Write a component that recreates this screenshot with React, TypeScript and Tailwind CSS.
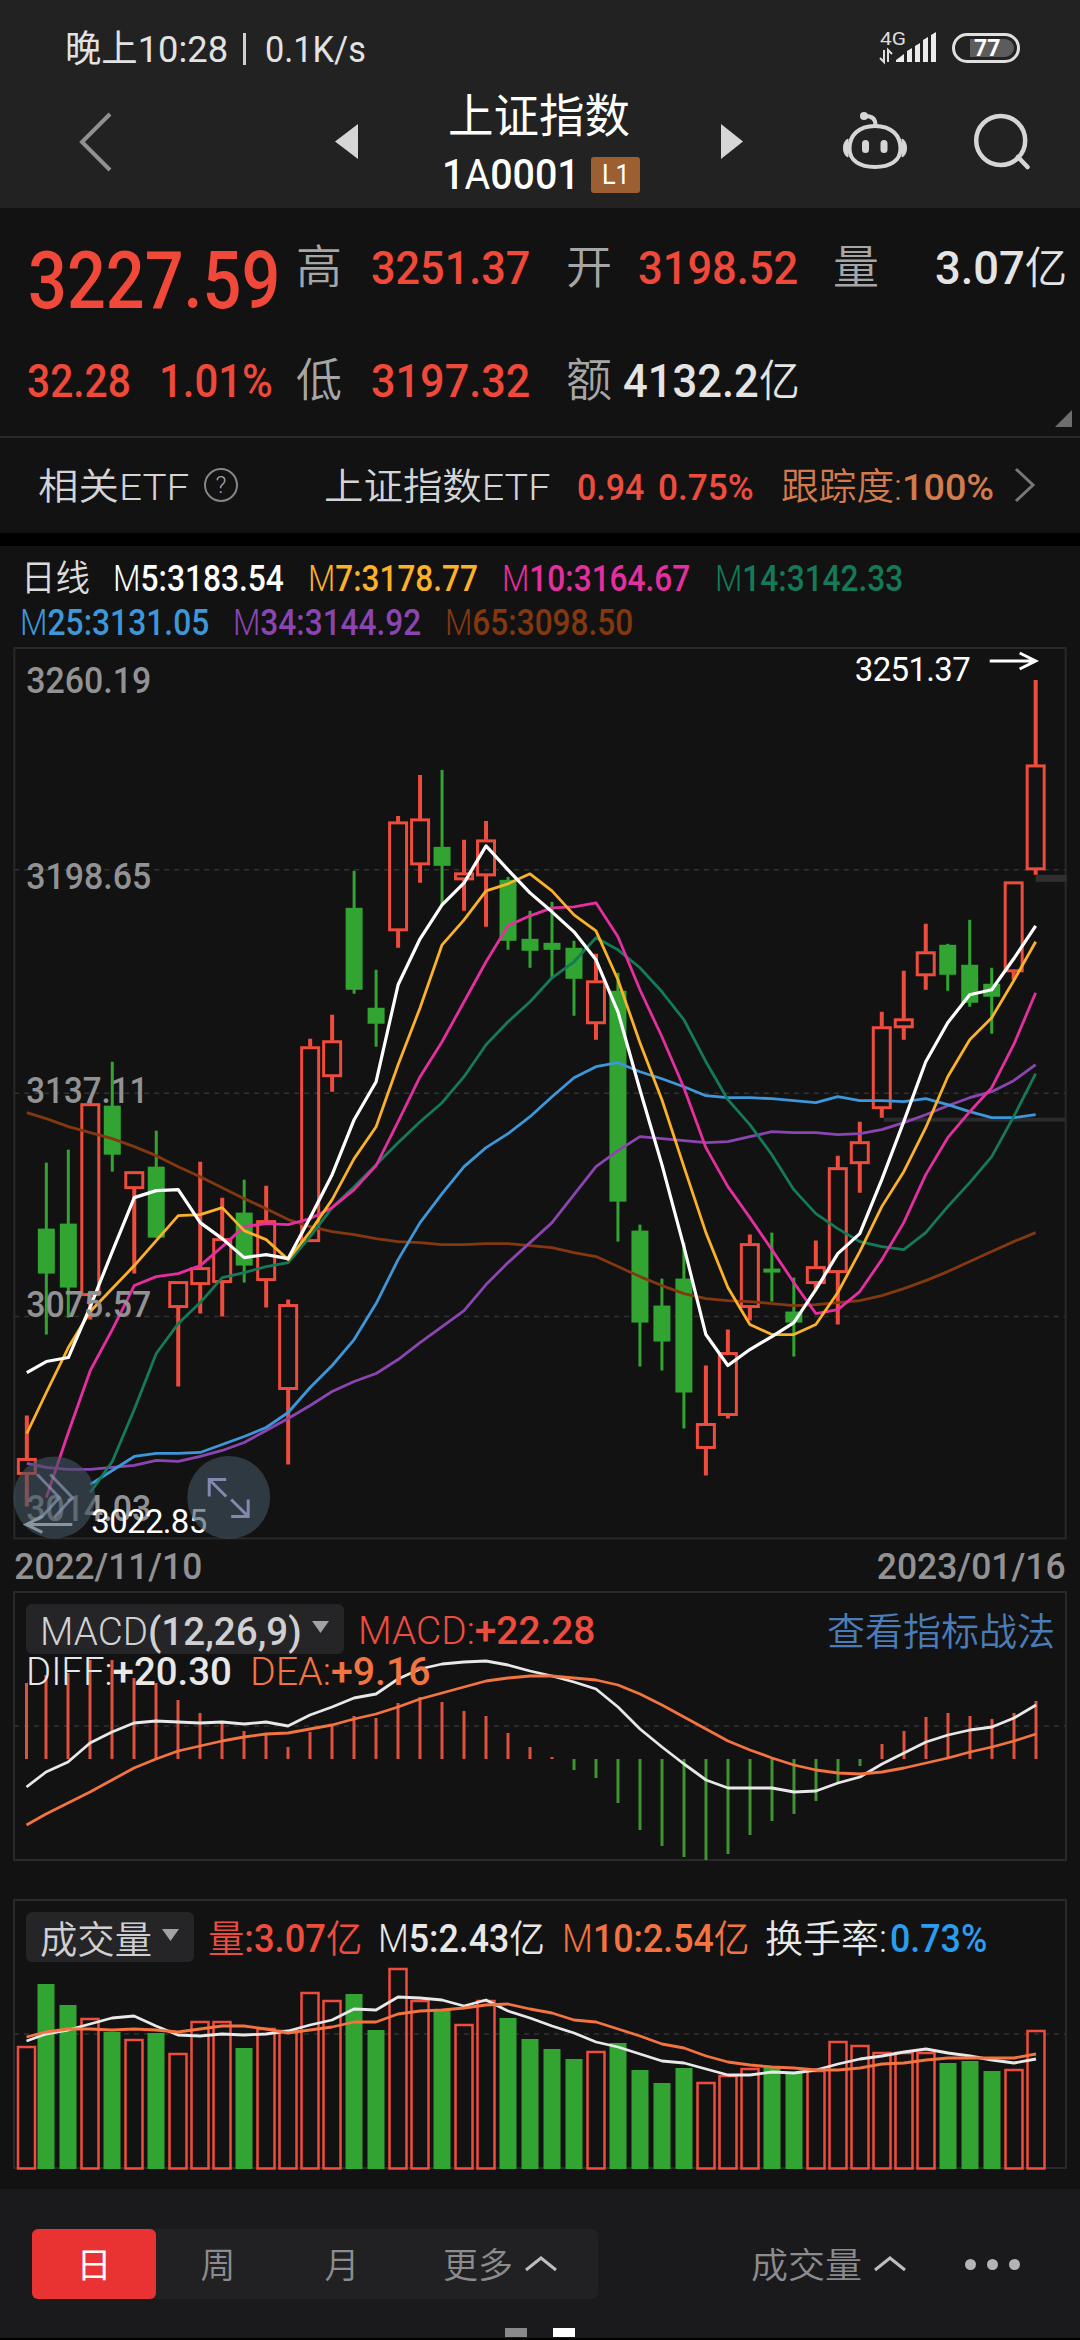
import { useLayoutEffect, useRef, type ReactNode } from "react";
import clsx from "clsx";

const RED = "#ee4d3d";
const GREEN = "#31a431";
const CENTER = (i: number) => (i === 0 ? 26.5 : 24 + 22 * i);

// Squeezes or stretches its text to the width of its box, the way
// the narrow DIN figures sit in their fixed columns.
function Fit({ className, children }: { className?: string; children: ReactNode }) {
  const box = useRef<HTMLDivElement>(null);
  const text = useRef<HTMLSpanElement>(null);

  useLayoutEffect(() => {
    if (!box.current || !text.current) return;
    const scale = box.current.clientWidth / text.current.offsetWidth;
    text.current.style.transform = `scaleX(${scale})`;
  }, []);

  return (
    <div ref={box} className={clsx("shrink-0 leading-none whitespace-pre", className)}>
      <span ref={text} className="inline-block origin-left">
        {children}
      </span>
    </div>
  );
}

type Candle = [up: number, high: number, top: number, bottom: number, low: number];

const candles: Candle[] = [
  [1, 1416, 1459, 1475, 1507],
  [0, 1163, 1229, 1274, 1335],
  [0, 1150, 1224, 1288, 1318],
  [1, 1099, 1104, 1296, 1320],
  [0, 1062, 1106, 1155, 1172],
  [1, 1172, 1172, 1189, 1274],
  [0, 1131, 1167, 1238, 1238],
  [1, 1282, 1282, 1308, 1387],
  [1, 1162, 1268, 1285, 1314],
  [1, 1198, 1239, 1283, 1317],
  [0, 1180, 1213, 1266, 1283],
  [1, 1186, 1221, 1281, 1308],
  [1, 1300, 1305, 1390, 1465],
  [1, 1039, 1047, 1242, 1242],
  [1, 1015, 1041, 1077, 1092],
  [0, 871, 908, 990, 994],
  [0, 970, 1008, 1024, 1047],
  [1, 816, 822, 931, 948],
  [1, 775, 819, 865, 883],
  [0, 770, 847, 866, 905],
  [1, 840, 873, 880, 911],
  [1, 821, 840, 876, 927],
  [0, 877, 880, 941, 950],
  [0, 911, 939, 951, 968],
  [0, 902, 943, 950, 979],
  [0, 941, 948, 979, 1016],
  [1, 954, 981, 1024, 1040],
  [0, 973, 991, 1202, 1242],
  [0, 1225, 1231, 1323, 1367],
  [0, 1279, 1306, 1342, 1371],
  [0, 1243, 1279, 1393, 1429],
  [1, 1366, 1424, 1449, 1476],
  [1, 1330, 1353, 1416, 1419],
  [1, 1235, 1244, 1308, 1321],
  [0, 1233, 1269, 1273, 1302],
  [0, 1278, 1312, 1323, 1357],
  [1, 1241, 1267, 1284, 1290],
  [1, 1156, 1168, 1273, 1325],
  [1, 1122, 1142, 1164, 1193],
  [1, 1012, 1027, 1109, 1118],
  [1, 971, 1019, 1028, 1040],
  [1, 924, 952, 976, 990],
  [0, 944, 945, 975, 991],
  [0, 920, 965, 1003, 1007],
  [0, 968, 984, 997, 1034],
  [1, 882, 882, 972, 980],
  [1, 680, 765, 870, 875],
];

type Series = { color: string; start?: number; width?: number; ys: number[] };

const averages: Series[] = [
  {
    color: "#84380f",
    ys: [1113, 1119, 1127, 1133, 1139, 1147, 1156, 1167, 1177, 1188, 1199, 1209, 1220, 1227, 1232, 1235, 1239, 1242, 1243, 1245, 1245, 1244, 1244, 1246, 1248, 1253, 1257, 1267, 1277, 1286, 1294, 1299, 1301, 1302, 1304, 1306, 1305, 1303, 1301, 1296, 1289, 1281, 1272, 1262, 1252, 1242, 1233],
  },
  {
    color: "#8b45b0",
    ys: [1464, 1468, 1470, 1470, 1468, 1466, 1461, 1462, 1457, 1451, 1443, 1431, 1419, 1406, 1392, 1382, 1374, 1360, 1343, 1327, 1311, 1285, 1263, 1243, 1223, 1195, 1167, 1151, 1137, 1139, 1141, 1143, 1142, 1137, 1132, 1133, 1133, 1135, 1134, 1130, 1123, 1115, 1106, 1098, 1092, 1081, 1065],
  },
  {
    color: "#3d97d8",
    start: 3,
    ys: [1485, 1471, 1457, 1454, 1454, 1453, 1445, 1437, 1428, 1413, 1388, 1366, 1340, 1304, 1260, 1223, 1194, 1167, 1148, 1134, 1117, 1097, 1078, 1067, 1063, 1072, 1079, 1087, 1096, 1098, 1098, 1099, 1101, 1103, 1097, 1101, 1101, 1102, 1099, 1105, 1112, 1118, 1118, 1115],
  },
  {
    color: "#147a57",
    start: 3,
    ys: [1493, 1462, 1410, 1354, 1324, 1303, 1278, 1273, 1267, 1263, 1237, 1208, 1187, 1165, 1143, 1122, 1103, 1077, 1045, 1022, 1002, 978, 962, 938, 950, 968, 992, 1020, 1062, 1100, 1125, 1155, 1190, 1214, 1229, 1242, 1247, 1250, 1233, 1207, 1183, 1157, 1117, 1074],
  },
  {
    color: "#e52fa0",
    start: 1,
    ys: [1498, 1433, 1371, 1330, 1286, 1277, 1274, 1266, 1247, 1227, 1224, 1225, 1219, 1208, 1190, 1166, 1122, 1077, 1042, 1002, 962, 926, 916, 908, 907, 903, 937, 990, 1037, 1088, 1148, 1187, 1218, 1250, 1283, 1314, 1310, 1292, 1260, 1223, 1175, 1138, 1112, 1088, 1045, 993],
  },
  {
    color: "#fbb128",
    ys: [1434, 1393, 1348, 1312, 1289, 1266, 1241, 1216, 1215, 1208, 1231, 1240, 1260, 1232, 1200, 1159, 1127, 1065, 1008, 945, 920, 891, 884, 874, 891, 915, 931, 980, 1043, 1100, 1167, 1233, 1288, 1325, 1335, 1335, 1325, 1293, 1252, 1207, 1172, 1128, 1077, 1040, 1018, 981, 942],
  },
  {
    color: "#ffffff",
    width: 3.2,
    ys: [1373, 1362, 1358, 1307, 1252, 1198, 1191, 1190, 1223, 1239, 1258, 1255, 1259, 1218, 1175, 1120, 1082, 985, 939, 905, 883, 846, 870, 893, 912, 932, 960, 1012, 1090, 1165, 1247, 1335, 1366, 1350, 1337, 1323, 1290, 1254, 1234, 1180, 1122, 1062, 1023, 995, 990, 959, 926],
  },
];

const macdBase = 1759;
const macdBars = [1683, 1675, 1673, 1660, 1660, 1678, 1683, 1700, 1713, 1723, 1731, 1734, 1747, 1732, 1724, 1716, 1718, 1703, 1697, 1702, 1711, 1716, 1733, 1747, 1757, 1770, 1778, 1803, 1830, 1846, 1857, 1860, 1854, 1835, 1821, 1814, 1801, 1783, 1766, 1744, 1731, 1717, 1713, 1716, 1719, 1713, 1701];

const macdLines: Series[] = [
  {
    color: "#e8e8e8",
    ys: [1787, 1772, 1762, 1743, 1732, 1723, 1721, 1722, 1723, 1722, 1724, 1722, 1726, 1715, 1707, 1698, 1694, 1679, 1669, 1664, 1662, 1661, 1665, 1671, 1676, 1682, 1689, 1707, 1729, 1747, 1764, 1780, 1788, 1788, 1788, 1792, 1791, 1783, 1777, 1764, 1753, 1742, 1735, 1730, 1727, 1718, 1705],
  },
  {
    color: "#f37440",
    ys: [1825, 1814, 1803, 1792, 1780, 1768, 1759, 1751, 1746, 1741, 1737, 1734, 1733, 1729, 1725, 1719, 1714, 1707, 1699, 1693, 1687, 1681, 1678, 1676, 1676, 1678, 1680, 1685, 1694, 1705, 1717, 1729, 1741, 1750, 1758, 1765, 1770, 1773, 1774, 1772, 1768, 1763, 1758, 1752, 1747, 1741, 1734],
  },
];

const volumeTops = [2046, 1984, 2005, 2018, 2032, 2039, 2033, 2053, 2021, 2021, 2048, 2028, 2030, 1992, 2000, 1994, 2030, 1968, 2000, 2009, 2024, 2000, 2018, 2039, 2049, 2059, 2051, 2043, 2070, 2083, 2068, 2082, 2075, 2068, 2067, 2072, 2070, 2041, 2045, 2052, 2052, 2052, 2063, 2061, 2071, 2069, 2030];

const volumeLines: Series[] = [
  {
    color: "#e8e8e8",
    ys: [2041, 2034, 2030, 2024, 2018, 2016, 2026, 2035, 2036, 2034, 2035, 2034, 2031, 2025, 2020, 2009, 2010, 1997, 1998, 2000, 2006, 2000, 2011, 2018, 2026, 2033, 2042, 2047, 2054, 2061, 2063, 2069, 2075, 2075, 2072, 2073, 2070, 2064, 2059, 2056, 2052, 2049, 2053, 2056, 2060, 2063, 2059],
  },
  {
    color: "#f37440",
    ys: [2037, 2032, 2029, 2029, 2030, 2029, 2030, 2032, 2029, 2026, 2026, 2029, 2033, 2030, 2027, 2022, 2022, 2014, 2011, 2010, 2008, 2005, 2004, 2009, 2013, 2020, 2022, 2029, 2036, 2044, 2048, 2056, 2062, 2065, 2067, 2068, 2070, 2070, 2068, 2064, 2063, 2060, 2058, 2058, 2058, 2058, 2054],
  },
];

function Line({ color, start = 0, width = 2.8, ys }: Series) {
  return (
    <polyline
      points={ys.map((y, i) => `${CENTER(i + start)},${y}`).join(" ")}
      fill="none"
      stroke={color}
      strokeWidth={width}
      strokeLinejoin="round"
    />
  );
}

function Grid({ y }: { y: number }) {
  return <line x1="14" x2="1066" y1={y} y2={y} stroke="#323234" strokeWidth="1.5" strokeDasharray="5 5" />;
}

function Frame({ top, bottom }: { top: number; bottom: number }) {
  return <rect x="14" y={top} width="1052" height={bottom - top} fill="none" stroke="#29292b" strokeWidth="2" />;
}

function PriceLabel({ x = 26, y, width = 125, children }: { x?: number; y: number; width?: number; children: string }) {
  return (
    <text x={x} y={y} textLength={width} lengthAdjust="spacingAndGlyphs" fontSize="37" fontWeight="500" fill="#929294">
      {children}
    </text>
  );
}

function StatusBar() {
  return (
    <div className="flex h-24 items-center text-[#e2e2e2]">
      <div className="ml-[65px] flex items-center gap-[15px] pt-0.5 text-[37px]">
        <Fit className="w-[163px]">晚上10:28</Fit>
        <div className="h-8 w-[3px] bg-[#d0d0d0]" />
        <Fit className="ml-1 w-[101px]">0.1K/s</Fit>
      </div>
      <svg className="ml-auto" width="60" height="48" viewBox="878 24 60 48">
        <text x="880" y="45" fontSize="18" textLength="26" lengthAdjust="spacingAndGlyphs" fill="#ddd">
          4G
        </text>
        <path d="M884 50v12l-4-4M888 62V50l4 4" fill="none" stroke="#ddd" strokeWidth="2" />
        <path d="M896 62v-2l8-6v8zM907 62V51l5-3v14zM915 62V46l5-3v19zM923 62V40l5-3v25zM931 62V35l5-3v30z" fill="#ececec" />
      </svg>
      <div className="mr-[60px] ml-3.5 flex h-[30px] w-[68px] items-center rounded-full border-[3.5px] border-[#e0e0e0]">
        <div className="ml-[15px] flex h-[18px] w-11 items-center rounded-r-full rounded-l bg-[#5c5c5c] pl-1">
          <span className="text-[23px] leading-none font-bold text-white">77</span>
        </div>
      </div>
    </div>
  );
}

function TitleBar() {
  return (
    <div className="flex h-28 items-start text-white">
      <svg className="mt-4 ml-[78px]" width="36" height="62" viewBox="0 0 36 62">
        <path d="M32 2 4 30l28 28" fill="none" stroke="#909090" strokeWidth="4" />
      </svg>
      <svg className="mt-7 ml-[221px]" width="24" height="36" viewBox="0 0 24 36">
        <path d="M23 0v35L0 17.500z" fill="#d6d6d6" />
      </svg>
      <div className="-mt-[3px] ml-[83px] flex w-[198px] flex-col">
        <Fit className="ml-1.5 w-[182px] text-[46px]">上证指数</Fit>
        <div className="mt-[15px] flex items-center">
          <Fit className="w-[138px] text-[42px] font-medium">
            1<span className="font-normal">A</span>0001
          </Fit>
          <div className="ml-[11px] flex h-9 w-[49px] items-center justify-center rounded-[3px] bg-[#9c5f32]">
            <Fit className="w-7 text-[28px]">L1</Fit>
          </div>
        </div>
      </div>
      <svg className="mt-7 ml-[81px]" width="24" height="36" viewBox="0 0 24 36">
        <path d="M0 0v35l22-17.500z" fill="#d6d6d6" />
      </svg>
      <svg className="mt-3.5 ml-[97px]" width="66" height="62" viewBox="842 110 66 62" fill="none" stroke="#d6d6d6" strokeWidth="4">
        <path d="M875 126c-17 0-25.500 10-25.500 22.500S860 167 875 167s25.500-6 25.500-18.500S892 126 875 126Z" />
        <path d="M875.500 125c0-6-3-9-10-9" />
        <circle cx="864" cy="116" r="4" fill="#d6d6d6" stroke="none" />
        <path d="M848 139v18c-6-2-6-16 0-18ZM902 139v18c6-2 6-16 0-18Z" fill="#d6d6d6" strokeWidth="1" />
        <path d="M865.500 143.500v6M884 143.500v6" strokeWidth="7" strokeLinecap="round" />
      </svg>
      <svg className="mt-4 ml-16" width="60" height="60" viewBox="971 112 60 60" fill="none" stroke="#d6d6d6" strokeWidth="4.500">
        <circle cx="999.700" cy="140.500" r="24.500" />
        <path d="m1017 157 9.500 10" strokeLinecap="round" />
      </svg>
    </div>
  );
}

function QuotePanel() {
  return (
    <div className="flex h-[230px] flex-col border-b-2 border-[#2a2a2c] text-[47px] font-medium text-[#f0493a]">
      <div className="flex h-[118px] items-center">
        <Fit className="mt-7 ml-[28px] w-[252px] text-[79px]">3227.59</Fit>
        <Fit className="ml-[16px] w-[46px] text-[46px] font-[350] text-[#a6a6a6]">高</Fit>
        <Fit className="ml-[29px] w-[159px]">3251.37</Fit>
        <Fit className="ml-9 w-[46px] text-[46px] font-[350] text-[#a6a6a6]">开</Fit>
        <Fit className="ml-[26px] w-[160px]">3198.52</Fit>
        <Fit className="ml-[35px] w-[46px] text-[46px] font-[350] text-[#a6a6a6]">量</Fit>
        <Fit className="ml-[56px] w-[132px] text-[#e4e4e4]">
          3.07<span className="text-[44px] font-[350]">亿</span>
        </Fit>
      </div>
      <div className="flex h-[108px] items-center">
        <Fit className="ml-[27px] w-[104px]">32.28</Fit>
        <Fit className="ml-7 w-[114px]">1.01%</Fit>
        <Fit className="ml-[23px] w-[46px] text-[46px] font-[350] text-[#a6a6a6]">低</Fit>
        <Fit className="ml-[29px] w-[159px]">3197.32</Fit>
        <Fit className="ml-9 w-[46px] text-[46px] font-[350] text-[#a6a6a6]">额</Fit>
        <Fit className="ml-[11px] w-[177px] text-[#e4e4e4]">
          4132.2<span className="text-[44px] font-[350]">亿</span>
        </Fit>
        <svg className="mt-auto mr-2 mb-[7px] ml-auto" width="17" height="17" viewBox="0 0 17 17">
          <path d="M17 0v17H0z" fill="#6e6e70" />
        </svg>
      </div>
    </div>
  );
}

function EtfRow() {
  return (
    <div className="flex h-[95px] items-center pt-1 text-[37px] font-[350] text-[#d4d4d6]">
      <Fit className="ml-[38px] w-[151px]">相关ETF</Fit>
      <div className="mb-1 ml-[15px] flex size-[34px] items-center justify-center rounded-full border-2 border-[#858587] text-[24px] leading-none font-light text-[#a0a0a2]">
        ?
      </div>
      <Fit className="ml-[86px] w-[226px]">上证指数ETF</Fit>
      <Fit className="ml-[27px] w-[67px] font-medium text-[#ee4d3d]">0.94</Fit>
      <Fit className="ml-[14px] w-[96px] font-medium text-[#ee4d3d]">0.75%</Fit>
      <Fit className="ml-[27px] w-[213px] text-[#d47b4c]">
        跟踪度:<span className="font-medium">100%</span>
      </Fit>
      <svg className="mb-1 ml-[19px]" width="24" height="38" viewBox="0 0 24 38">
        <path d="m3 3 17 16L3 35" fill="none" stroke="#77777a" strokeWidth="3" />
      </svg>
    </div>
  );
}

function Average({ name, value, className }: { name: string; value: string; className: string }) {
  return (
    <Fit className={clsx("font-medium", className)}>
      <span className="font-[350]">M</span>
      {name}:{value}
    </Fit>
  );
}

function Legend() {
  return (
    <div className="flex h-[101px] flex-col pt-[11px] text-[36px]">
      <div className="flex h-11 items-center">
        <Fit className="ml-[21px] w-[69px] font-[350] text-[#dcdcdc]">日线</Fit>
        <Average name="5" value="3183.54" className="ml-[23px] w-[171px] text-white" />
        <Average name="7" value="3178.77" className="ml-[24px] w-[170px] text-[#fbb128]" />
        <Average name="10" value="3164.67" className="ml-6 w-[188px] text-[#e52fa0]" />
        <Average name="14" value="3142.33" className="ml-[25px] w-[188px] text-[#147a57]" />
      </div>
      <div className="flex h-11 items-center">
        <Average name="25" value="3131.05" className="ml-[20px] w-[189px] text-[#3d97d8]" />
        <Average name="34" value="3144.92" className="ml-6 w-[188px] text-[#8b45b0]" />
        <Average name="65" value="3098.50" className="ml-6 w-[188px] text-[#84380f]" />
      </div>
    </div>
  );
}

function CandleChart() {
  return (
    <svg className="block" width="1080" height="945" viewBox="0 647 1080 945">
      <Frame top={648} bottom={1539} />
      <Grid y={870} />
      <Grid y={1093.5} />
      <Grid y={1317} />
      <rect x="1036" y="875" width="31" height="7" fill="#303032" />
      <rect x="884" y="1118" width="182" height="4" fill="#2c2c2e" />

      {candles.map(([up, high, top, bottom, low], i) => {
        const x = CENTER(i);
        return up ? (
          <g key={i} stroke={RED} strokeWidth="3" fill="none">
            <path d={`M${x} ${high}V${top}M${x} ${bottom}V${low}`} strokeWidth="4" />
            <rect x={x - 8.5} y={top + 1} width="17" height={Math.max(bottom - top - 2, 3)} />
          </g>
        ) : (
          <g key={i} fill={GREEN}>
            <rect x={x - 1.5} y={high} width="3" height={low - high} />
            <rect x={x - 8.5} y={top} width="17" height={bottom - top} />
          </g>
        );
      })}
      {averages.map((line) => (
        <Line key={line.color} {...line} />
      ))}

      <PriceLabel y={693}>3260.19</PriceLabel>
      <PriceLabel y={889}>3198.65</PriceLabel>
      <PriceLabel y={1103} width={122}>3137.11</PriceLabel>
      <PriceLabel y={1317}>3075.57</PriceLabel>
      <PriceLabel y={1522}>3014.03</PriceLabel>

      <text x="855" y="681" textLength="116" fontSize="33" fill="#fff">
        3251.37
      </text>
      <path d="M990 661h45M1020 653l16 8-16 8" fill="none" stroke="#fff" strokeWidth="3" />
      <text x="91" y="1534" textLength="116" fontSize="33" fill="#fff">
        3022.85
      </text>
      <path d="M72 1525H27M42 1517l-16 8 16 8" fill="none" stroke="#fff" strokeWidth="3" />

      {/* floating scroll and full-screen buttons */}
      <circle cx="54" cy="1498" r="41" fill="#42525f" fillOpacity="0.62" />
      <path d="m37 1475 22 23-18 20M50 1475l22 23-18 20" fill="none" stroke="#8496b4" strokeOpacity="0.7" strokeWidth="3" />
      <circle cx="228.500" cy="1498" r="41.500" fill="#42525f" fillOpacity="0.62" />
      <path d="M226 1480h-17v17M209 1480l17 17M231 1517h17v-17M248 1517l-17-17" fill="none" stroke="#8288ae" strokeWidth="3" />

      <PriceLabel x={14} y={1580} width={188}>2022/11/10</PriceLabel>
      <PriceLabel x={877} y={1580} width={189}>2023/01/16</PriceLabel>
    </svg>
  );
}

function Dropdown({ className, children }: { className: string; children: ReactNode }) {
  return (
    <div className={clsx("flex h-[50px] shrink-0 items-center rounded-md bg-[#252527] pl-3.5 font-[350] text-[#d0d0d2]", className)}>
      {children}
      <svg className="mb-1 ml-2.5" width="17" height="12" viewBox="0 0 17 12">
        <path d="M0 0h17L8.500 12z" fill="#a2a2a4" />
      </svg>
    </div>
  );
}

function MacdPanel() {
  return (
    <div className="grid h-[308px]">
      <svg className="block [grid-area:1/1]" width="1080" height="308" viewBox="0 1591 1080 308">
        <Frame top={1592} bottom={1860} />
        <Grid y={1726} />
        {macdBars.map((y, i) => (
          <line key={i} x1={CENTER(i)} x2={CENTER(i)} y1={macdBase} y2={y} stroke={y > macdBase ? "#3f9431" : "#e0503f"} strokeWidth="3" />
        ))}
        {macdLines.map((line) => (
          <Line key={line.color} {...line} />
        ))}
      </svg>
      <div className="z-10 flex flex-col pt-[13px] text-[38px] [grid-area:1/1]">
        <div className="flex items-center">
          <Dropdown className="ml-[26px] w-[318px]">
            <Fit className="w-[262px] pt-1.5">
              MACD<span className="font-medium">(12,26,9)</span>
            </Fit>
          </Dropdown>
          <Fit className="ml-[14px] w-[237px] pt-1 font-medium text-[#ee4d3d]">
            <span className="font-[350]">MACD:</span>+22.28
          </Fit>
          <Fit className="mr-[25px] ml-auto w-[228px] pt-1.5 font-[350] text-[#4a7db8]">查看指标战法</Fit>
        </div>
        <div className="-mt-px flex items-center">
          <Fit className="ml-[26px] w-[206px] font-medium text-[#e8e8e8]">
            <span className="font-[350]">DIFF:</span>+20.30
          </Fit>
          <Fit className="ml-[18px] w-[181px] font-medium text-[#f37440]">
            <span className="font-[350]">DEA:</span>+9.16
          </Fit>
        </div>
      </div>
    </div>
  );
}

function VolumePanel() {
  return (
    <div className="grid h-[290px]">
      <svg className="block [grid-area:1/1]" width="1080" height="290" viewBox="0 1899 1080 290">
        <Frame top={1900} bottom={2168} />
        <Grid y={2034} />
        {volumeTops.map((y, i) =>
          candles[i][0] ? (
            <rect key={i} x={CENTER(i) - 8.5} y={y + 1} width="17" height={2167.5 - y} fill="none" stroke={RED} strokeWidth="2.5" />
          ) : (
            <rect key={i} x={CENTER(i) - 8.5} y={y} width="17" height={2169 - y} fill={GREEN} />
          )
        )}
        {volumeLines.map((line) => (
          <Line key={line.color} {...line} />
        ))}
      </svg>
      <div className="z-10 flex h-[76px] items-center text-[38px] font-medium [grid-area:1/1]">
        <Dropdown className="ml-[26px] w-[168px]">
          <Fit className="w-[112px] pt-1.5">成交量</Fit>
        </Dropdown>
        <Fit className="ml-[14px] w-[154px] pt-1 text-[#ee4d3d]">
          <span className="font-[350]">量</span>:3.07<span className="font-[350]">亿</span>
        </Fit>
        <Fit className="ml-4 w-[167px] pt-1 text-[#e8e8e8]">
          <span className="font-[350]">M</span>5:2.43<span className="font-[350]">亿</span>
        </Fit>
        <Fit className="ml-[17px] w-[187px] pt-1 text-[#f37440]">
          <span className="font-[350]">M</span>10:2.54<span className="font-[350]">亿</span>
        </Fit>
        <Fit className="ml-4 w-[122px] pt-1 font-[350] text-[#e8e8e8]">换手率:</Fit>
        <Fit className="ml-[3px] w-[97px] pt-1 text-[#2a9df0]">0.73%</Fit>
      </div>
    </div>
  );
}

function Caret() {
  return (
    <svg width="32" height="16" viewBox="0 0 32 16">
      <path d="m1 14 15-12 15 12" fill="none" stroke="#bdbdbf" strokeWidth="3" />
    </svg>
  );
}

function BottomBar() {
  return (
    <div className="flex h-[151px] flex-col bg-[#1a1a1c] text-[35px] leading-none font-[350] text-[#8c8c8e]">
      <div className="mt-10 flex h-[70px] items-center">
        <div className="ml-8 flex h-[70px] w-[566px] items-center rounded-md bg-[#212123]">
          <div className="flex h-[70px] w-[124px] items-center justify-center rounded-md bg-[#e93232] pt-1 font-normal text-white">日</div>
          <div className="w-[124px] pt-1 text-center">周</div>
          <div className="w-[124px] pt-1 text-center">月</div>
          <Fit className="ml-[39px] w-[70px] pt-1">更多</Fit>
          <div className="ml-3">
            <Caret />
          </div>
        </div>
        <Fit className="ml-[153px] w-[111px] pt-1">成交量</Fit>
        <div className="ml-3">
          <Caret />
        </div>
        <div className="ml-[59px] flex gap-[11px]">
          <div className="size-[11px] rounded-full bg-[#b4b4b6]" />
          <div className="size-[11px] rounded-full bg-[#b4b4b6]" />
          <div className="size-[11px] rounded-full bg-[#b4b4b6]" />
        </div>
      </div>
      <div className="mt-[29px] flex h-[9px] justify-center gap-[26px]">
        <div className="w-[22px] bg-[#89898b]" />
        <div className="w-[22px] bg-white" />
      </div>
      <div className="mt-auto h-0.5 bg-black" />
    </div>
  );
}

export default function App() {
  return (
    <div className="flex h-[2340px] w-[1080px] flex-col overflow-hidden bg-[#121213] font-['Roboto','Noto_Sans_CJK_SC',sans-serif]">
      <div className="h-[208px] bg-[#222222]">
        <StatusBar />
        <TitleBar />
      </div>
      <QuotePanel />
      <EtfRow />
      <div className="h-[13px] bg-black" />
      <Legend />
      <CandleChart />
      <MacdPanel />
      <VolumePanel />
      <BottomBar />
    </div>
  );
}
